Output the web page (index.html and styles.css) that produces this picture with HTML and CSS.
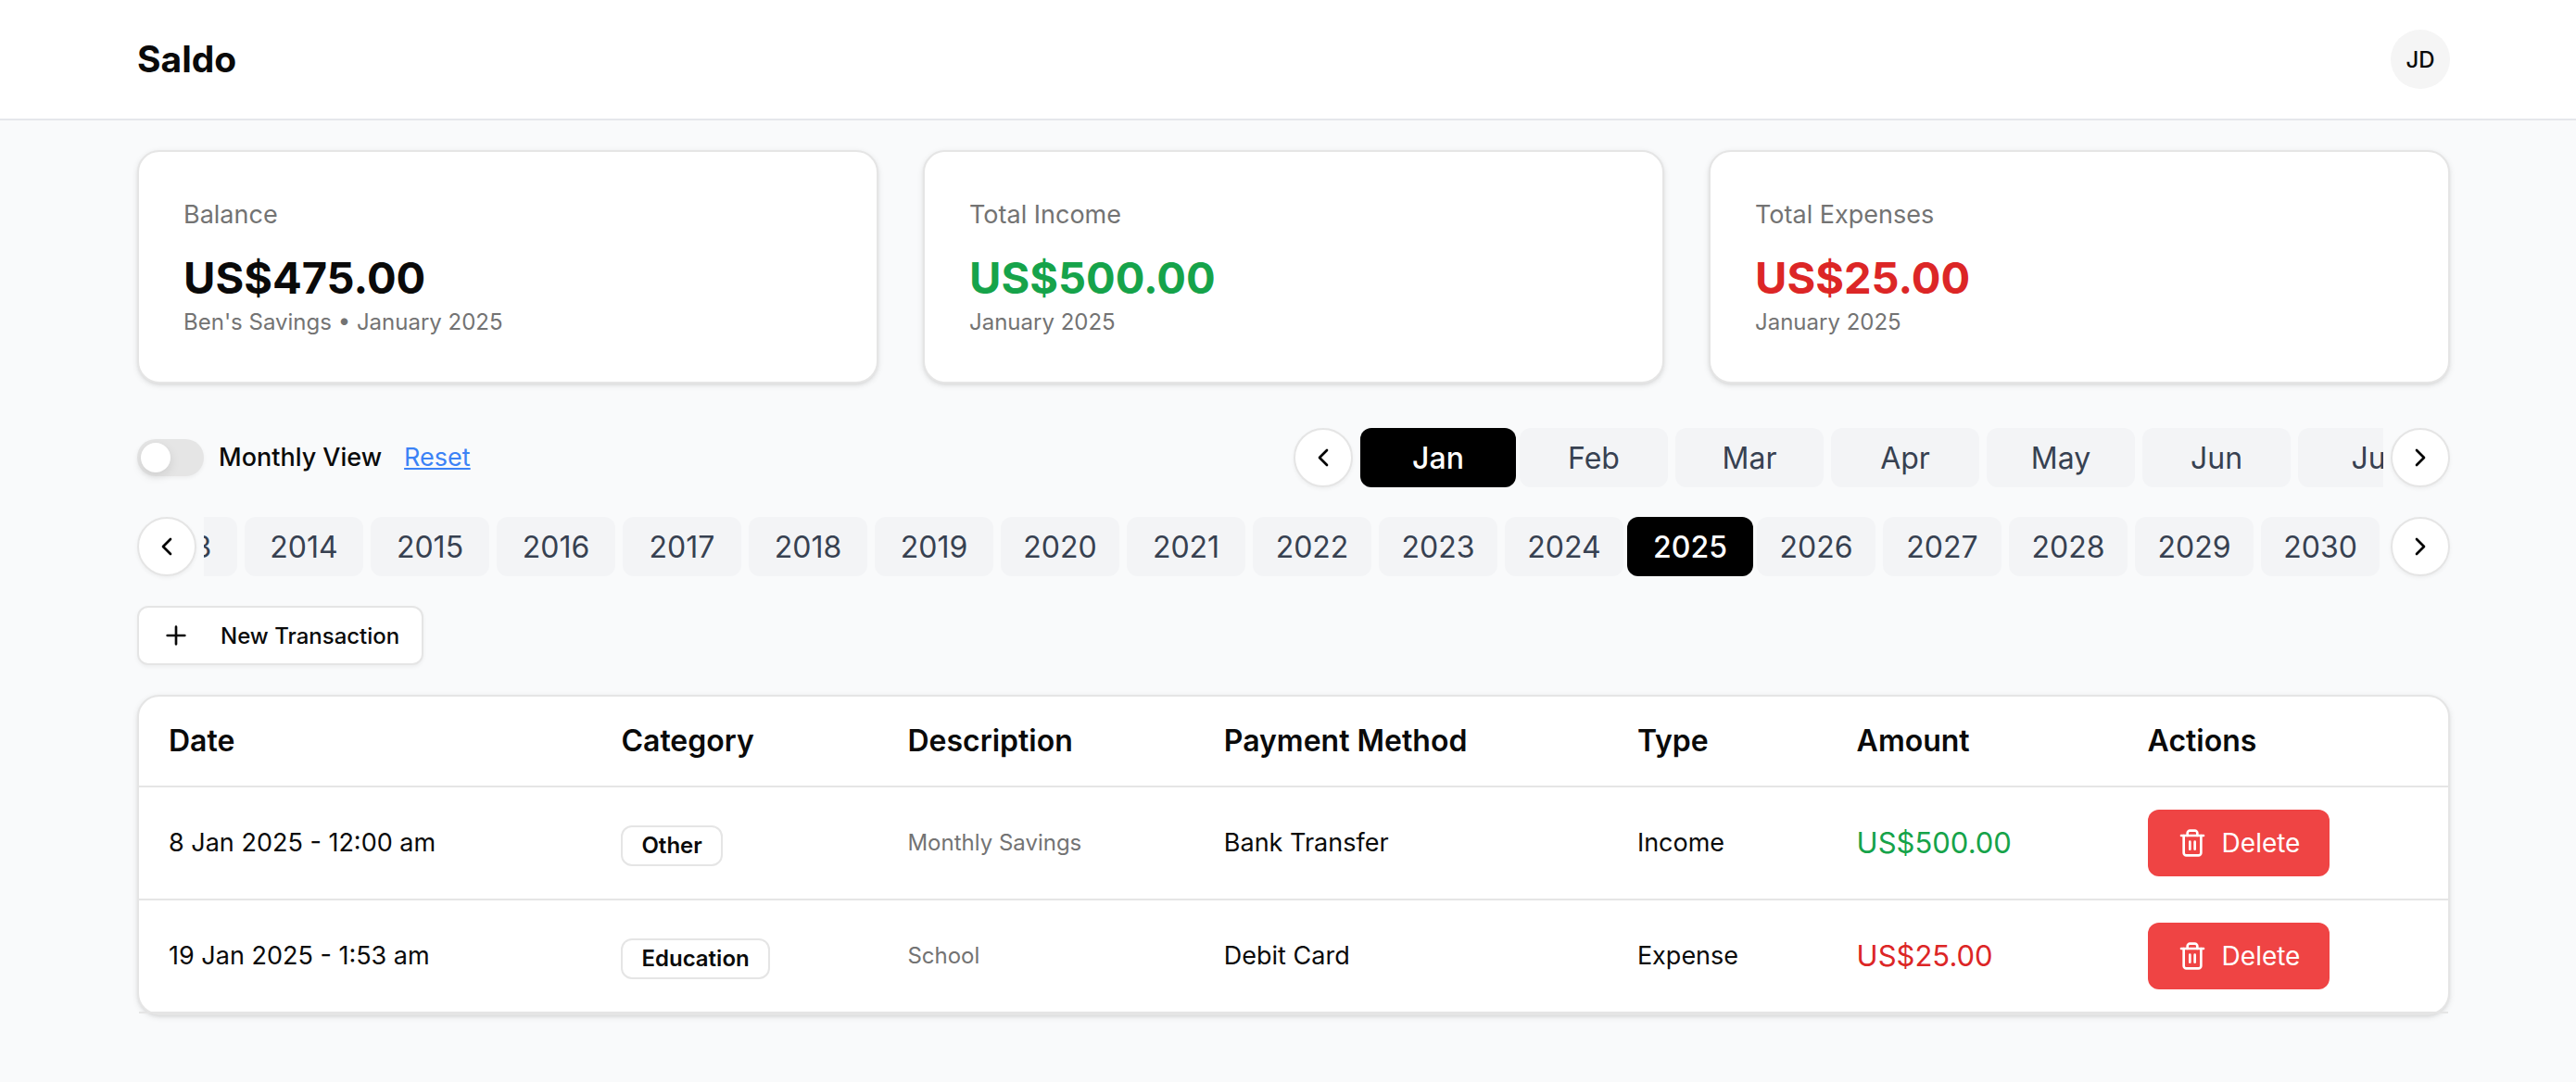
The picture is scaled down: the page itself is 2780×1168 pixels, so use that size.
FILE: index.html
```
<!DOCTYPE html>
<html lang="en">
<head>
	<meta charset="utf-8">
	<title>Saldo</title>
	<meta content="width=device-width, initial-scale=1" name="viewport">
	<link rel="stylesheet" href="styles.css">
</head>
<body>
<svg class="sprite" aria-hidden="true">
	<symbol id="chevron-left" viewBox="0 0 24 24"><path d="m15 18-6-6 6-6"></path></symbol>
	<symbol id="chevron-right" viewBox="0 0 24 24"><path d="m9 18 6-6-6-6"></path></symbol>
	<symbol id="plus" viewBox="0 0 24 24"><path d="M5 12h14M12 5v14"></path></symbol>
	<symbol id="trash" viewBox="0 0 24 24">
		<path d="M3 6h18"></path>
		<path d="M19 6v14c0 1-1 2-2 2H7c-1 0-2-1-2-2V6"></path>
		<path d="M8 6V4c0-1 1-2 2-2h4c1 0 2 1 2 2v2"></path>
		<path d="M10 11v6M14 11v6"></path>
	</symbol>
</svg>

<header class="topbar">
	<h1 class="brand">Saldo</h1>
	<button class="avatar" type="button">JD</button>
</header>

<main class="content">
	<section class="cards">
		<div class="card">
			<h2 class="card-label">Balance</h2>
			<div class="card-amount">US$475.00</div>
			<p class="card-note">Ben's Savings • January 2025</p>
		</div>
		<div class="card">
			<h2 class="card-label">Total Income</h2>
			<div class="card-amount income">US$500.00</div>
			<p class="card-note">January 2025</p>
		</div>
		<div class="card">
			<h2 class="card-label">Total Expenses</h2>
			<div class="card-amount expense">US$25.00</div>
			<p class="card-note">January 2025</p>
		</div>
	</section>

	<section class="filters">
		<div class="view-toggle">
			<input id="monthly" class="switch" type="checkbox" role="switch">
			<label for="monthly">Monthly View</label>
			<a class="reset" href="#">Reset</a>
		</div>
		<div class="scroller months">
			<button class="round" type="button" aria-label="Previous months"><svg class="icon"><use href="#chevron-left"></use></svg></button>
			<div class="track">
				<button class="pill active" type="button">Jan</button>
				<button class="pill" type="button">Feb</button>
				<button class="pill" type="button">Mar</button>
				<button class="pill" type="button">Apr</button>
				<button class="pill" type="button">May</button>
				<button class="pill" type="button">Jun</button>
				<button class="pill" type="button">Jul</button>
			</div>
			<button class="round" type="button" aria-label="Next months"><svg class="icon"><use href="#chevron-right"></use></svg></button>
		</div>
	</section>

	<section class="scroller years">
		<button class="round" type="button" aria-label="Previous years"><svg class="icon"><use href="#chevron-left"></use></svg></button>
		<div class="track">
			<button class="pill" type="button">2013</button>
			<button class="pill" type="button">2014</button>
			<button class="pill" type="button">2015</button>
			<button class="pill" type="button">2016</button>
			<button class="pill" type="button">2017</button>
			<button class="pill" type="button">2018</button>
			<button class="pill" type="button">2019</button>
			<button class="pill" type="button">2020</button>
			<button class="pill" type="button">2021</button>
			<button class="pill" type="button">2022</button>
			<button class="pill" type="button">2023</button>
			<button class="pill" type="button">2024</button>
			<button class="pill active" type="button">2025</button>
			<button class="pill" type="button">2026</button>
			<button class="pill" type="button">2027</button>
			<button class="pill" type="button">2028</button>
			<button class="pill" type="button">2029</button>
			<button class="pill" type="button">2030</button>
		</div>
		<button class="round" type="button" aria-label="Next years"><svg class="icon"><use href="#chevron-right"></use></svg></button>
	</section>

	<button class="new-btn" type="button"><svg class="icon"><use href="#plus"></use></svg>New Transaction</button>

	<div class="table-card">
		<table>
			<thead>
				<tr>
					<th class="col-date">Date</th>
					<th class="col-category">Category</th>
					<th class="col-description">Description</th>
					<th class="col-method">Payment Method</th>
					<th class="col-type">Type</th>
					<th class="col-amount">Amount</th>
					<th class="col-actions">Actions</th>
				</tr>
			</thead>
			<tbody>
				<tr>
					<td>8 Jan 2025 - 12:00 am</td>
					<td class="category"><span class="badge">Other</span></td>
					<td class="description">Monthly Savings</td>
					<td>Bank Transfer</td>
					<td>Income</td>
					<td class="amount income">US$500.00</td>
					<td><button class="delete-btn" type="button"><svg class="icon"><use href="#trash"></use></svg>Delete</button></td>
				</tr>
				<tr>
					<td>19 Jan 2025 - 1:53 am</td>
					<td class="category"><span class="badge">Education</span></td>
					<td class="description">School</td>
					<td>Debit Card</td>
					<td>Expense</td>
					<td class="amount expense">US$25.00</td>
					<td><button class="delete-btn" type="button"><svg class="icon"><use href="#trash"></use></svg>Delete</button></td>
				</tr>
			</tbody>
		</table>
	</div>
</main>
</body>
</html>
```
FILE: styles.css
```
* {
	box-sizing: border-box;
}

body {
	margin: 0;
	background: #f9fafb;
	color: #0a0a0a;
	font-family: Inter, "Liberation Sans", sans-serif;
	font-size: 27px;
	line-height: 40px;
}

button {
	font-family: inherit;
	color: inherit;
	cursor: pointer;
}

.sprite {
	display: none;
}

.icon {
	width: 32px;
	height: 32px;
	flex: none;
	fill: none;
	stroke: currentColor;
	stroke-width: 2;
	stroke-linecap: round;
	stroke-linejoin: round;
}

.topbar {
	display: flex;
	align-items: center;
	justify-content: space-between;
	padding: 32px 136px 32px 148px;
	background: #fff;
	border-bottom: 2px solid #e5e7eb;
}

.brand {
	margin: 0;
	font-size: 39px;
	font-weight: 700;
}

.avatar {
	width: 64px;
	height: 64px;
	padding: 0;
	border: none;
	border-radius: 50%;
	background: #f5f5f5;
	font-size: 24px;
	font-weight: 500;
}

.content {
	display: flex;
	flex-direction: column;
	align-items: stretch;
	gap: 32px;
	padding: 32px 136px 70px 148px;
}

/* summary cards */
.cards {
	display: grid;
	grid-template-columns: repeat(3, 1fr);
	gap: 48px;
	margin-bottom: 16px;
}

.card,
.table-card {
	background: #fff;
	border: 2px solid #e5e5e5;
	border-radius: 24px;
	box-shadow: 0 2px 6px rgba(0, 0, 0, 0.1), 0 2px 4px -2px rgba(0, 0, 0, 0.1);
}

.card {
	padding: 48px;
}

.card-label {
	margin: 0 0 16px;
	font-size: 27px;
	font-weight: 400;
	color: #737373;
}

.card-amount {
	font-size: 47px;
	font-weight: 700;
	line-height: 64px;
}

.card-note {
	margin: 0;
	font-size: 24px;
	line-height: 32px;
	color: #737373;
}

.income {
	color: #16a34a;
}

.expense {
	color: #dc2626;
}

/* month and year filters */
.filters {
	display: flex;
	align-items: center;
	justify-content: space-between;
}

.view-toggle {
	display: flex;
	align-items: center;
	font-weight: 500;
}

.switch {
	appearance: none;
	width: 72px;
	height: 40px;
	margin: 0 16px 0 0;
	padding: 4px;
	border-radius: 20px;
	background: #e5e5e5;
	box-shadow: 0 2px 4px rgba(0, 0, 0, 0.05);
	cursor: pointer;
}

.switch::before {
	content: "";
	display: block;
	width: 32px;
	height: 32px;
	border-radius: 50%;
	background: #fff;
	box-shadow: 0 4px 12px rgba(0, 0, 0, 0.1);
}

.switch:checked {
	background: #171717;
}

.switch:checked::before {
	margin-left: 32px;
}

.reset {
	margin-left: 24px;
	font-weight: 400;
	color: #3b82f6;
}

.scroller {
	display: flex;
	gap: 8px;
}

.months {
	width: 50%;
}

.round {
	display: flex;
	align-items: center;
	justify-content: center;
	flex: none;
	width: 64px;
	height: 64px;
	padding: 0;
	border: 2px solid #e5e5e5;
	border-radius: 50%;
	background: #fff;
	color: #000;
	box-shadow: 0 2px 4px rgba(0, 0, 0, 0.05);
}

.track {
	flex: 1;
	display: flex;
	gap: 8px;
	min-width: 0;
	padding: 0 4px;
	overflow: hidden;
}

.pill {
	flex: none;
	height: 64px;
	padding: 0;
	border: none;
	border-radius: 12px;
	background: #f3f4f6;
	color: #374151;
	font-size: 32px;
}

.months .pill {
	width: 160px;
}

/* scrolled to the last year */
.years .track {
	justify-content: flex-end;
}

.years .pill {
	width: 128px;
}

.pill.active {
	margin: 0 -4px;
	background: #000;
	color: #fff;
	font-weight: 500;
}

.months .pill.active {
	width: 168px;
}

.years .pill.active {
	width: 136px;
}

.new-btn {
	display: flex;
	align-items: center;
	align-self: flex-start;
	gap: 32px;
	height: 64px;
	padding: 0 24px;
	border: 2px solid #e5e5e5;
	border-radius: 12px;
	background: #fff;
	font-size: 24px;
	font-weight: 500;
	box-shadow: 0 2px 4px rgba(0, 0, 0, 0.05);
}

/* transactions */
table {
	width: 100%;
	border-collapse: separate;
	border-spacing: 0;
	table-layout: fixed;
}

th,
td {
	padding: 0 32px;
	border-bottom: 2px solid #e5e5e5;
	text-align: left;
	vertical-align: middle;
}

th {
	height: 98px;
	font-size: 32px;
	font-weight: 600;
}

td {
	height: 122px;
}

.col-date {
	width: 19.6%;
}

.col-category {
	width: 12.4%;
}

.col-description {
	width: 13.7%;
}

.col-method {
	width: 17.9%;
}

.col-type {
	width: 9.5%;
}

.col-amount {
	width: 12.6%;
}

.category {
	padding-top: 6px;
}

.description {
	font-size: 24px;
	color: #737373;
}

.amount {
	font-size: 31px;
}

.badge {
	display: inline-block;
	padding: 4px 20px;
	border: 2px solid #e5e5e5;
	border-radius: 12px;
	font-size: 24px;
	font-weight: 600;
	line-height: 32px;
}

.delete-btn {
	display: flex;
	align-items: center;
	gap: 16px;
	height: 72px;
	padding: 0 32px;
	border: none;
	border-radius: 12px;
	background: #ef4444;
	color: #fff;
	font-size: 28px;
}
```
